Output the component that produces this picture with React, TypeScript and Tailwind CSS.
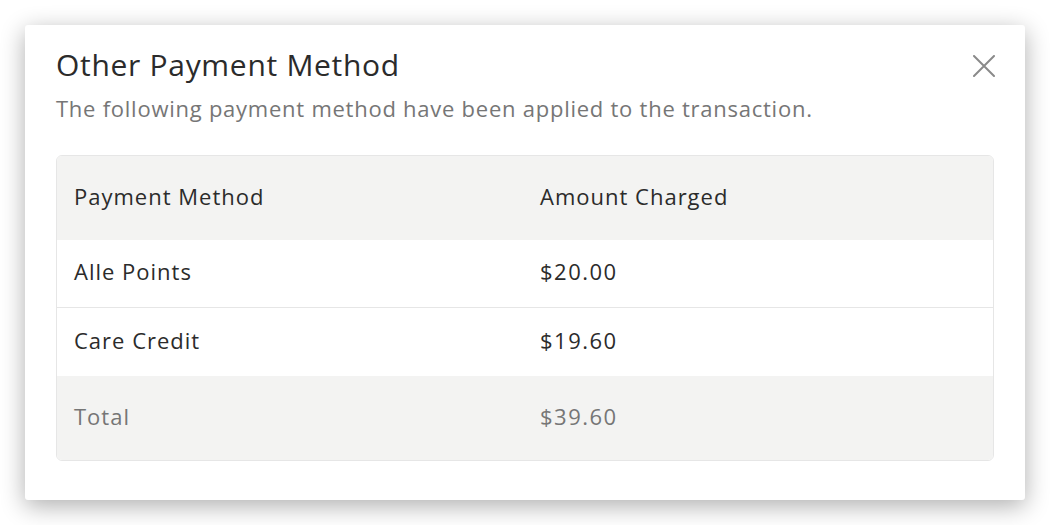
import React from "react";

export default function App() {
  const rows = [
    { m: "Alle Points", a: "$20.00" },
    { m: "Care Credit", a: "$19.60" },
  ];
  return (
    <div className="w-[1050px] h-[525px] bg-white p-[25px]" style={{ fontFamily: "'Open Sans', Lato, sans-serif" }}>
      <div className="w-[1000px] h-[475px] bg-white rounded-[3px] shadow-[0_6px_24px_rgba(0,0,0,0.32)] px-[31px] pt-[22px] relative">
        <button className="absolute right-[30px] top-[30px] w-[22px] h-[22px]">
          <svg width="22" height="22" viewBox="0 0 22 22" fill="none">
            <path d="M1 1L21 21M21 1L1 21" stroke="#8a8a8a" strokeWidth="2" strokeLinecap="round" />
          </svg>
        </button>
        <h1 className="text-[30px] leading-[36px] text-[#2b2b2b] tracking-[0.7px]">Other Payment Method</h1>
        <p className="mt-[11px] text-[22px] leading-[28px] text-[#767676] tracking-[0.75px]">
          The following payment method have been applied to the transaction.
        </p>
        <div className="mt-[33px] w-[938px] border border-[#e6e6e6] rounded-[6px] overflow-hidden text-[22px] text-[#2b2b2b] tracking-[1px]">
          <div className="grid grid-cols-[466px_1fr] h-[84px] items-center bg-[#f3f3f2] px-[17px] pb-[4px]">
            <div>Payment Method</div>
            <div>Amount Charged</div>
          </div>
          {rows.map((r, i) => (
            <div
              key={r.m}
              className={`grid grid-cols-[466px_1fr] h-[68px] items-center bg-white px-[17px] pb-[4px] ${i === 0 ? "border-b border-[#e6e6e6]" : ""}`}
            >
              <div>{r.m}</div>
              <div className="tracking-[1.5px]">{r.a}</div>
            </div>
          ))}
          <div className="grid grid-cols-[466px_1fr] h-[84px] items-center bg-[#f3f3f2] px-[17px] pb-[4px] text-[#767676]">
            <div>Total</div>
            <div className="tracking-[1.5px]">$39.60</div>
          </div>
        </div>
      </div>
    </div>
  );
}
